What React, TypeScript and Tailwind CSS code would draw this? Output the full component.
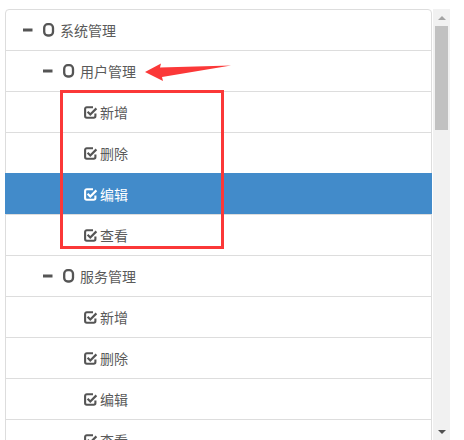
import clsx from "clsx";

type Node = {
  text: string;
  level: 0 | 1 | 2;
  selected?: boolean;
};

const NODES: Node[] = [
  { text: "系统管理", level: 0 },
  { text: "用户管理", level: 1 },
  { text: "新增", level: 2 },
  { text: "删除", level: 2 },
  { text: "编辑", level: 2, selected: true },
  { text: "查看", level: 2 },
  { text: "服务管理", level: 1 },
  { text: "新增", level: 2 },
  { text: "删除", level: 2 },
  { text: "编辑", level: 2 },
  { text: "查看", level: 2 },
];

export default function App() {
  return (
    <div className="relative h-[440px] w-[464px] overflow-hidden bg-white font-['Noto_Sans_CJK_SC',sans-serif]">
      <div className="ml-[5px] mt-[9px] flex h-[431px] items-start gap-px">
        <ul className="w-[427px]">
          {NODES.map((node, i) => (
            <TreeRow key={i} node={node} first={i === 0} />
          ))}
        </ul>
        <FakeScrollbar />
      </div>
      <Annotations />
    </div>
  );
}

function TreeRow({ node, first }: { node: Node; first: boolean }) {
  const color = node.selected ? "#ffffff" : "#555555";
  return (
    <li
      className={clsx(
        "-mb-px flex h-[42px] items-center border px-[15px] text-[14px] leading-5",
        first && "rounded-t-[4px]",
        node.selected
          ? "border-[#428bca] bg-[#428bca] text-white"
          : "border-[#dddddd] bg-white text-[#5a5a5a]",
      )}
    >
      {/* indent per level, plus an empty expand slot for leaves */}
      {node.level >= 1 && <span className="w-5 shrink-0" />}
      {node.level === 2 && <span className="w-10 shrink-0" />}
      {node.level < 2 ? (
        <>
          <span className="flex w-5 shrink-0 items-center pl-[2px]">
            <MinusIcon color={color} />
          </span>
          <span className="flex w-[19px] shrink-0 items-center pl-[2px]">
            <UncheckedIcon color={color} />
          </span>
        </>
      ) : (
        <span className="flex w-[19px] shrink-0 items-center pl-[2px]">
          <CheckIcon color={color} />
        </span>
      )}
      <span>{node.text}</span>
    </li>
  );
}

function MinusIcon({ color }: { color: string }) {
  return (
    <svg width="10" height="4" viewBox="0 0 10 4" aria-hidden="true">
      <rect x="0" y="0.5" width="9.5" height="3" fill={color} />
    </svg>
  );
}

function UncheckedIcon({ color }: { color: string }) {
  return (
    <svg width="12" height="14" viewBox="0 0 12 14" aria-hidden="true">
      <rect x="1.2" y="1.2" width="8.8" height="11.3" rx="3.6" fill="none" stroke={color} strokeWidth="2.3" />
    </svg>
  );
}

function CheckIcon({ color }: { color: string }) {
  return (
    <svg width="15" height="15" viewBox="0 0 15 15" aria-hidden="true">
      <path
        d="M10 2.2H3.8A1.7 1.7 0 0 0 2.1 3.9V11.1A1.7 1.7 0 0 0 3.8 12.8H10.7A1.7 1.7 0 0 0 12.4 11.1V8.6"
        fill="none"
        stroke={color}
        strokeWidth="2.1"
      />
      <path d="M4.6 6.8L7.3 9.5L13.4 3.4" fill="none" stroke={color} strokeWidth="2.2" />
    </svg>
  );
}

function FakeScrollbar() {
  return (
    <div className="flex h-[431px] w-[17px] shrink-0 flex-col items-center bg-[#f1f1f1]">
      <div className="flex h-[17px] w-full items-center justify-center">
        <span className="h-0 w-0 border-x-[4px] border-b-[4px] border-x-transparent border-b-[#a3a3a3]" />
      </div>
      <div className="h-[104px] w-[13px] bg-[#c1c1c1]" />
      <div className="flex-1" />
      <div className="flex h-[17px] w-full items-center justify-center">
        <span className="h-0 w-0 border-x-[4px] border-t-[4px] border-x-transparent border-t-[#505050]" />
      </div>
    </div>
  );
}

function Annotations() {
  return (
    <svg
      className="pointer-events-none absolute inset-0"
      width="464"
      height="440"
      viewBox="0 0 464 440"
      aria-hidden="true"
    >
      <rect x="61.5" y="91.5" width="161" height="156" fill="none" stroke="#fb3838" strokeWidth="3" />
      <polygon
        points="145,72 161,63.5 160,67.5 231,65.5 162,77 163,81"
        fill="#fb3838"
      />
    </svg>
  );
}
